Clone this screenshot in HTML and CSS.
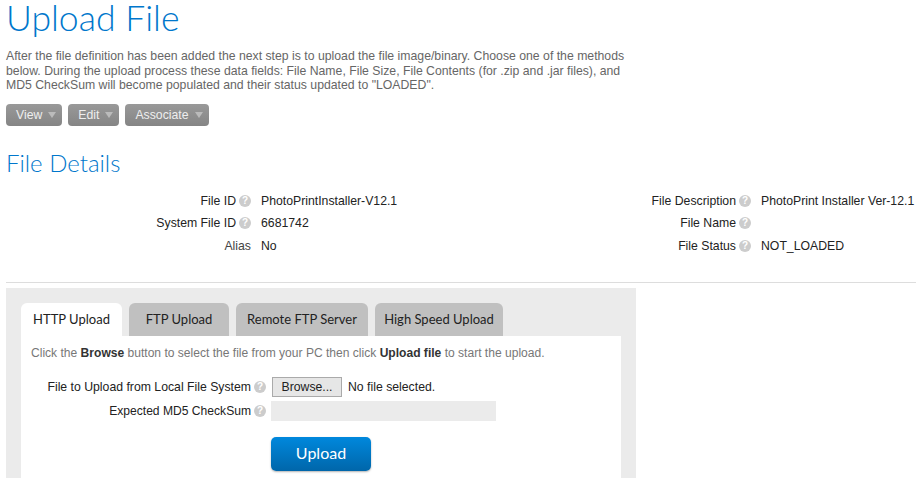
FILE: index.html
```html
<!DOCTYPE html>
<html lang="en">
<head>
    <meta charset="UTF-8">
    <title>Upload File</title>
    <link rel="stylesheet" href="styles.css">
</head>
<body>
    <h1>Upload File</h1>
    <p class="intro">After the file definition has been added the next step is to upload the file image/binary. Choose one of the methods below. During the upload process these data fields: File Name, File Size, File Contents (for .zip and .jar files), and MD5 CheckSum will become populated and their status updated to "LOADED".</p>

    <div class="actions">
        <button class="menu-btn">View <span class="caret"></span></button>
        <button class="menu-btn">Edit <span class="caret"></span></button>
        <button class="menu-btn">Associate <span class="caret"></span></button>
    </div>

    <h2>File Details</h2>

    <div class="details">
        <div class="detail-col">
            <div class="detail-row">
                <span class="detail-label">File ID <span class="help">?</span></span>
                <span class="detail-value">PhotoPrintInstaller-V12.1</span>
            </div>
            <div class="detail-row">
                <span class="detail-label">System File ID <span class="help">?</span></span>
                <span class="detail-value">6681742</span>
            </div>
            <div class="detail-row">
                <span class="detail-label alias">Alias</span>
                <span class="detail-value">No</span>
            </div>
        </div>
        <div class="detail-col">
            <div class="detail-row">
                <span class="detail-label">File Description <span class="help">?</span></span>
                <span class="detail-value">PhotoPrint Installer Ver-12.1</span>
            </div>
            <div class="detail-row">
                <span class="detail-label">File Name <span class="help">?</span></span>
                <span class="detail-value"></span>
            </div>
            <div class="detail-row">
                <span class="detail-label">File Status <span class="help">?</span></span>
                <span class="detail-value">NOT_LOADED</span>
            </div>
        </div>
    </div>

    <hr class="divider">

    <div class="upload-box">
        <ul class="tabs">
            <li class="tab tab-http">HTTP Upload</li>
            <li class="tab tab-ftp">FTP Upload</li>
            <li class="tab tab-remote">Remote FTP Server</li>
            <li class="tab tab-speed">High Speed Upload</li>
        </ul>
        <div class="tab-panel">
            <p class="hint">Click the <b>Browse</b> button to select the file from your PC then click <b>Upload file</b> to start the upload.</p>
            <div class="form-row">
                <span class="form-label">File to Upload from Local File System <span class="help">?</span></span>
                <button class="browse-btn">Browse...</button>
                <span class="no-file">No file selected.</span>
            </div>
            <div class="form-row">
                <span class="form-label md5-label">Expected MD5 CheckSum <span class="help">?</span></span>
                <input class="md5-input" type="text">
            </div>
            <button class="upload-btn">Upload</button>
        </div>
    </div>
</body>
</html>
```

FILE: styles.css
```css
html, body {
    height: 478px;
    overflow: hidden;
}

body {
    margin: 0;
    padding: 0 0 0 6px;
    background: white;
    font-family: "Liberation Sans", Arial, sans-serif;
    font-size: 12.25px;
    color: #222;
}

h1 {
    margin: 0;
    height: 45px;
    font-family: Lato, sans-serif;
    font-weight: 300;
    font-size: 35.6px;
    line-height: 36px;
    color: #0077cc;
}

.intro {
    width: 630px;
    margin: 4px 0 0;
    line-height: 14.5px;
    color: #666;
}

.actions {
    display: flex;
    gap: 6px;
    margin-top: 11px;
}

.menu-btn {
    display: flex;
    align-items: center;
    gap: 6px;
    height: 22px;
    padding: 0 6px 0 10px;
    border: none;
    border-radius: 4px;
    background: linear-gradient(#999, #858585);
    font-family: inherit;
    font-size: 12.25px;
    color: #eee;
}

.caret {
    width: 0;
    height: 0;
    border-left: 4px solid transparent;
    border-right: 4px solid transparent;
    border-top: 6px solid #bbb;
}

h2 {
    margin: 22px 0 0;
    font-family: Lato, sans-serif;
    font-weight: 300;
    font-size: 24px;
    line-height: 30px;
    color: #0077cc;
}

.details {
    display: grid;
    grid-template-columns: 500px 410px;
    margin-top: 12px;
}

.detail-row {
    display: flex;
    height: 22.5px;
    align-items: center;
}

.detail-label {
    display: flex;
    justify-content: flex-end;
    align-items: center;
    gap: 3px;
    width: 245px;
    white-space: nowrap;
}

.alias {
    color: #444;
}

.detail-value {
    margin-left: 10px;
    white-space: nowrap;
}

.help {
    display: inline-block;
    width: 12px;
    height: 12px;
    border-radius: 50%;
    background: #ccc;
    color: white;
    font-size: 10px;
    font-weight: bold;
    line-height: 12px;
    text-align: center;
}

.divider {
    width: 910px;
    height: 1px;
    margin: 25px 0 5px;
    border: none;
    background: #ddd;
}

.upload-box {
    width: 600px;
    height: 175px;
    padding: 15px 15px 0;
    background: #ebebeb;
}

.tabs {
    display: flex;
    gap: 7px;
    margin: 0;
    padding: 0;
    list-style: none;
}

.tab {
    height: 33px;
    border-radius: 6px 6px 0 0;
    background: #c0c0c0;
    font-family: Lato, sans-serif;
    font-size: 13px;
    line-height: 33px;
    text-align: center;
    color: #222;
}

.tab-http {
    width: 101px;
    background: white;
}

.tab-ftp {
    width: 100px;
}

.tab-remote {
    width: 132px;
}

.tab-speed {
    width: 128px;
}

.tab-panel {
    height: 132px;
    padding-top: 10px;
    background: white;
}

.hint {
    margin: 0 0 0 10px;
    font-size: 12.07px;
    color: #777;
}

.hint b {
    color: #333;
}

.form-row {
    display: flex;
    align-items: center;
    height: 20px;
    margin-top: 4px;
}

.hint + .form-row {
    margin-top: 17px;
}

.form-label {
    display: flex;
    justify-content: flex-end;
    align-items: center;
    gap: 3px;
    width: 245px;
    white-space: nowrap;
}

.md5-label {
    font-size: 12.1px;
}

.browse-btn {
    width: 70px;
    height: 20px;
    margin-left: 6px;
    padding: 0;
    border: 1px solid #aaa;
    background: #e6e6e6;
    font-family: inherit;
    font-size: 12.25px;
    color: #222;
}

.no-file {
    margin-left: 6px;
}

.md5-input {
    width: 225px;
    height: 20px;
    box-sizing: border-box;
    margin-left: 5px;
    border: none;
    background: #ebebeb;
}

.upload-btn {
    display: block;
    width: 100px;
    height: 34px;
    margin: 16px 0 0 250px;
    padding: 0 0 3px;
    border: none;
    border-radius: 5px;
    background: linear-gradient(#0088dd, #0066aa);
    box-shadow: 0 1px 2px rgba(0, 0, 0, 0.3);
    font-family: Lato, sans-serif;
    font-size: 16px;
    color: white;
}
```
